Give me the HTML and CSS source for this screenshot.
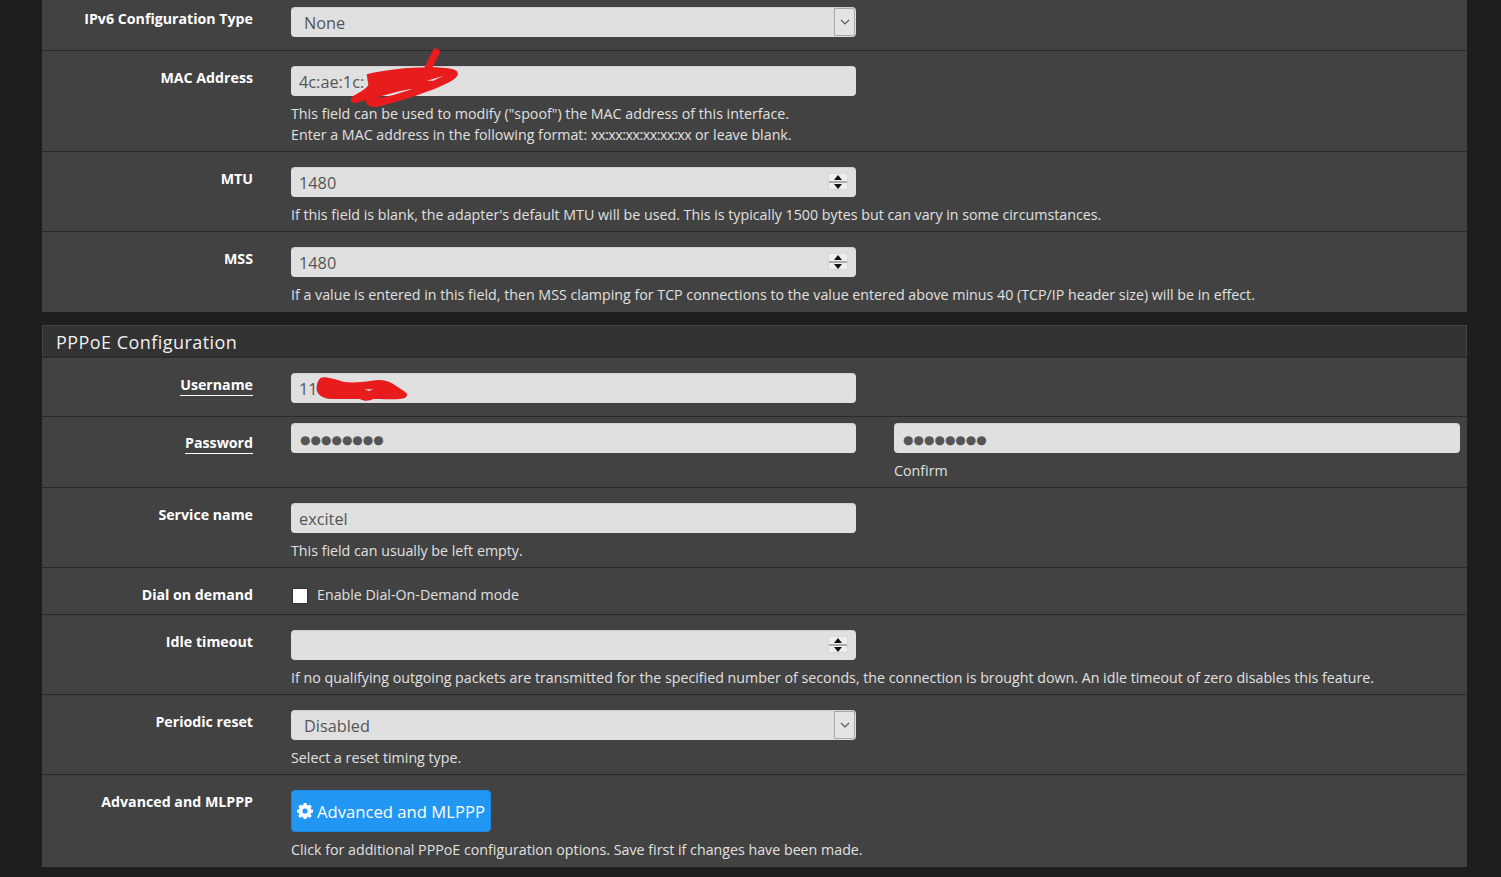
FILE: index.html
```html
<!DOCTYPE html>
<html lang="en">
<head>
<meta charset="utf-8">
<title>Interfaces</title>
<link rel="stylesheet" href="styles.css">
</head>
<body>
<main class="page">
  <section class="panel first">
    <div class="row short">
      <div class="label">IPv6 Configuration Type</div>
      <div class="field"><div class="select">None<span class="caret"><svg width="10" height="6" viewBox="0 0 10 6"><path d="M1 1l4 4 4-4" fill="none" stroke="#555" stroke-width="1.1"/></svg></span></div></div>
    </div>
    <div class="row">
      <div class="label">MAC Address</div>
      <div class="field">
        <div class="input">4c:ae:1c:
          <svg class="scribble mac" width="130" height="70" viewBox="0 0 390 210"><path d="M288 36L258 98" fill="none" stroke="#e81c1c" stroke-width="22" stroke-linecap="round"/><path fill="#e81c1c" fill-rule="evenodd" d="M80 103C150 85 280 75 340 88C360 94 358 110 335 122C290 148 200 178 115 200C90 205 75 192 78 180L45 190C30 187 28 175 40 168C60 155 75 150 85 135ZM108 174C140 162 180 152 218 146C180 160 140 172 108 174ZM260 122L310 108L280 122Z"/></svg>
        </div>
        <p class="help">This field can be used to modify ("spoof") the MAC address of this interface.<br>Enter a MAC address in the following format: <span class="mask">xx:xx:xx:xx:xx:xx</span> or leave blank.</p>
      </div>
    </div>
    <div class="row">
      <div class="label">MTU</div>
      <div class="field">
        <div class="input">1480<span class="spin"><i class="up"></i><i class="down"></i></span></div>
        <p class="help">If this field is blank, the adapter's default MTU will be used. This is typically 1500 bytes but can vary in some circumstances.</p>
      </div>
    </div>
    <div class="row end">
      <div class="label">MSS</div>
      <div class="field">
        <div class="input">1480<span class="spin"><i class="up"></i><i class="down"></i></span></div>
        <p class="help">If a value is entered in this field, then MSS clamping for TCP connections to the value entered above minus 40 (TCP/IP header size) will be in effect.</p>
      </div>
    </div>
  </section>

  <section class="panel">
    <h2 class="heading">PPPoE Configuration</h2>
    <div class="row tight">
      <div class="label"><span class="req">Username</span></div>
      <div class="field">
        <div class="input">11
          <svg class="scribble user" width="125" height="40" viewBox="0 0 375 120"><path fill="#e81c1c" fill-rule="evenodd" d="M65 50C68 30 75 20 90 22C110 24 125 30 145 35C170 40 200 36 230 32C255 28 275 30 295 42C310 54 330 62 336 72C338 84 325 88 290 88C265 88 245 86 232 88C222 94 205 94 195 87C160 86 125 88 100 86C78 82 62 70 65 50ZM208 58L234 58L222 63Z"/></svg>
        </div>
      </div>
    </div>
    <div class="row tight pw">
      <div class="label"><span class="req">Password</span></div>
      <div class="field double">
        <div class="col"><div class="input dots">●●●●●●●●</div></div>
        <div class="col wide"><div class="input dots">●●●●●●●●</div><p class="help">Confirm</p></div>
      </div>
    </div>
    <div class="row">
      <div class="label">Service name</div>
      <div class="field">
        <div class="input">excitel</div>
        <p class="help">This field can usually be left empty.</p>
      </div>
    </div>
    <div class="row check">
      <div class="label">Dial on demand</div>
      <div class="field checkline"><span class="box"></span><span class="help inline">Enable Dial-On-Demand mode</span></div>
    </div>
    <div class="row">
      <div class="label">Idle timeout</div>
      <div class="field">
        <div class="input"><span class="spin"><i class="up"></i><i class="down"></i></span></div>
        <p class="help">If no qualifying outgoing packets are transmitted for the specified number of seconds, the connection is brought down. An idle timeout of zero disables this feature.</p>
      </div>
    </div>
    <div class="row">
      <div class="label">Periodic reset</div>
      <div class="field">
        <div class="select">Disabled<span class="caret"><svg width="10" height="6" viewBox="0 0 10 6"><path d="M1 1l4 4 4-4" fill="none" stroke="#555" stroke-width="1.1"/></svg></span></div>
        <p class="help">Select a reset timing type.</p>
      </div>
    </div>
    <div class="row last">
      <div class="label">Advanced and MLPPP</div>
      <div class="field">
        <button class="btn"><svg class="gear" width="16" height="16" viewBox="0 0 16 16"><path fill="#fff" fill-rule="evenodd" d="M6.600 0h2.800l.4 2.100 1.200.5L12.800 1.400l2 2-1.200 1.800.5 1.200 1.900.4v2.800l-2 .4-.5 1.200 1.200 1.800-2 2-1.800-1.200-1.200.5-.4 2H6.600l-.4-2-1.200-.5-1.800 1.200-2-2 1.200-1.800-.5-1.200-1.900-.4V6.800l2-.4.5-1.200L1.300 3.400l2-2 1.800 1.200 1.200-.5zM8 5.400a2.600 2.600 0 1 0 0 5.200a2.600 2.600 0 0 0 0-5.200z"/></svg><span class="btn-text">Advanced and MLPPP</span></button>
        <p class="help">Click for additional PPPoE configuration options. Save first if changes have been made.</p>
      </div>
    </div>
  </section>
</main>
</body>
</html>
```
FILE: styles.css
```css
* { box-sizing: border-box; }
html, body { margin: 0; height: 877px; overflow: hidden; background: #1e1e1e; }
body { font-family: "Open Sans", "Noto Sans", sans-serif; font-size: 14px; color: #e0e0e0; }
.page { margin: 0 34px 0 42px; }
.panel { background: #424242; margin-bottom: 13px; }
.first { margin-top: -8px; }
.heading {
  margin: 0; height: 33px; padding: 4px 13px 0; background: #333;
  border: 1px solid #424242; border-bottom: 2px solid #2b2b2b;
  font-size: 18px; font-weight: 400; line-height: 24px; letter-spacing: .45px; color: #f0f0f0;
}
.row { display: flex; padding: 15px 0 6px; border-bottom: 1px solid #2a2a2a; min-height: 80px; }
.row.short { padding-bottom: 13px; min-height: 59px; }
.row.tight { padding-bottom: 13px; min-height: 58px; }
.row.pw { padding-top: 6px; padding-bottom: 6px; min-height: 71px; }
.row.check { min-height: 47px; }
.row.end { border-bottom: 0; }
.row.last { border-bottom: 0; min-height: 92px; }
.label { width: 211px; flex: none; text-align: right; font-weight: 700; font-size: 14.2px; line-height: 20px; color: #fff; margin-top: 2px; white-space: nowrap; }
.pw .label { margin-top: 10px; }
.check .label { margin-top: 2px; }
.req { border-bottom: 1px solid #fff; padding-bottom: 1px; }
.field { margin-left: 38px; flex: 1; min-width: 0; }
.double { display: flex; gap: 38px; }
.col { width: 565px; }
.col.wide { width: 566px; }
.input, .select {
  position: relative; height: 30px; background: #e0e0e0; border-radius: 4px;
  color: #555; font-size: 16.3px; line-height: 33px; padding-left: 8px; box-shadow: inset 0 1px 1px rgba(0,0,0,.07);
  white-space: nowrap;
}
.select { padding-left: 13px; line-height: 33px; }
.field > .input, .field > .select { width: 565px; }
.dots { font-family: "DejaVu Sans", sans-serif; font-size: 12px; line-height: 34px; padding-left: 9px; }
.caret {
  position: absolute; right: 1px; top: 1px; width: 21px; height: 28px; background: #e4e4e4;
  border: 1px solid #a8a8a8; display: flex; align-items: center; justify-content: center; border-radius: 0 2px 2px 0;
}
.spin {
  position: absolute; right: 8px; top: 6px; width: 20px; height: 17px;
  background: linear-gradient(#eee 7px, #aaa 7px, #aaa 9px, #eee 9px);
  display: flex; flex-direction: column; align-items: center; justify-content: center; gap: 4px;
  border: 1px solid #d8d8d8;
}
.spin i { width: 0; height: 0; border-left: 4px solid transparent; border-right: 4px solid transparent; display: block; }
.spin .up { border-bottom: 5px solid #111; }
.spin .down { border-top: 5px solid #111; }
.help { margin: 7px 0 0; font-size: 14.24px; line-height: 21px; color: #e0e0e0; white-space: nowrap; }
.help.inline { margin: 0; }
.mask { letter-spacing: -.45px; }
.checkline { display: flex; align-items: center; gap: 9px; height: 20px; margin-top: 1px; }
.box { width: 16px; height: 16px; background: #fff; border: 1px solid #333; margin-left: 1px; margin-top: 3px; }
.scribble { position: absolute; }
.mac { left: 49px; top: -26px; }
.user { left: 4px; top: -3px; }
.btn {
  display: flex; align-items: center; gap: 4px; width: 200px; height: 42px; padding: 0 0 0 5px;
  background: #2196f3; border: 1px solid #1e88e5; border-radius: 4px; color: #fff;
  font-family: inherit; font-size: 16.65px; line-height: 24px; white-space: nowrap;
}
.btn-text { padding-top: 2px; }
.gear { flex: none; }
```
